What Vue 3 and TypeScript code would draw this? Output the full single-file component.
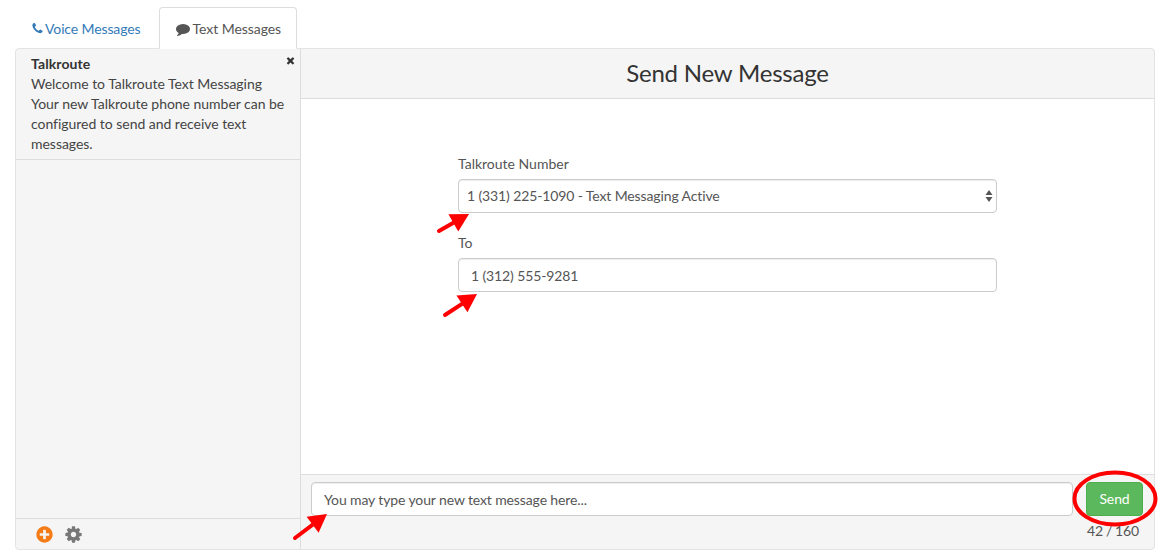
<script setup lang="ts">
const phone = 'M1600 1240q0 27-10 70.5t-21 68.5q-21 50-122 106-94 51-186 51-27 0-53-3.5t-57.5-12.5-47-14.5-55.5-20.5-49-18q-98-35-175-83-127-79-264-216t-216-264q-48-77-83-175-3-9-18-49t-20.5-55.5-14.5-47-12.5-57.5-3.5-53q0-92 51-186 56-101 106-122 25-11 68.5-21t70.5-10q14 0 21 3 18 6 53 76 11 19 30 54t35 63.5 31 53.5q3 4 17.5 25t21.5 35.5 7 28.5q0 20-28.5 50t-62 55-62 53-28.5 46q0 9 5 22.5t8.5 20.5 14 24 11.5 19q76 137 174 235t235 174q2 1 19 11.5t24 14 20.5 8.5 22.5 5q18 0 46-28.5t53-62 55-62 50-28.5q14 0 28.5 7t35.5 21.5 25 17.5q25 15 53.5 31t63.5 35 54 30q70 35 76 53 3 7 3 21z'
const comment = 'M1792 896q0 174-120 321.5t-326 233-450 85.5q-70 0-145-8-198 175-460 242-49 14-114 22-17 2-30.5-9t-17.5-29v-1q-3-4-.5-12t2-10 4.5-9.5l6-9 7-8.5 8-9q7-8 31-34.5t34.5-38 31-39.5 32.5-51 27-59 26-76q-157-89-247.5-220t-90.5-281q0-130 71-248.5t191-204.5 286-136.5 348-50.5q244 0 450 85.5t326 233 120 321.5z'
const plus = 'M1344 960v-128q0-26-19-45t-45-19h-256v-256q0-26-19-45t-45-19h-128q-26 0-45 19t-19 45v256h-256q-26 0-45 19t-19 45v128q0 26 19 45t45 19h256v256q0 26 19 45t45 19h128q26 0 45-19t19-45v-256h256q26 0 45-19t19-45zm320-64q0 209-103 385.5t-279.5 279.5-385.5 103-385.5-103-279.5-279.5-103-385.5 103-385.5 279.5-279.5 385.5-103 385.5 103 279.5 279.5 103 385.5z'
const cog = 'M1152 896q0-106-75-181t-181-75-181 75-75 181 75 181 181 75 181-75 75-181zm512-109v222q0 12-8 23t-20 13l-185 28q-19 54-39 91 35 50 107 138 10 12 10 25t-9 23q-27 37-99 108t-94 71q-12 0-26-9l-138-108q-44 23-91 38-16 136-29 186-7 28-36 28h-222q-14 0-24.5-8.5t-11.5-21.5l-28-184q-49-16-90-37l-141 107q-10 9-25 9-14 0-25-11-126-114-165-168-7-10-7-23 0-12 8-23 15-21 51-66.5t54-70.5q-27-50-41-99l-183-27q-13-2-21-12.5t-8-23.5v-222q0-12 8-23t19-13l186-28q14-46 39-92-40-57-107-138-10-12-10-24 0-10 9-23 26-36 98.5-107.5t94.5-71.5q13 0 26 10l138 107q44-23 91-38 16-136 29-186 7-28 36-28h222q14 0 24.5 8.5t11.5 21.5l28 184q49 16 90 37l142-107q9-9 24-9 13 0 25 10 129 119 165 170 7 8 7 22 0 12-8 23-15 21-51 66.5t-54 70.5q26 50 41 98l183 28q13 2 21 12.5t8 23.5z'
const remove = 'M1490 1322q0 40-28 68l-136 136q-28 28-68 28t-68-28l-294-294-294 294q-28 28-68 28t-68-28l-136-136q-28-28-28-68t28-68l294-294-294-294q-28-28-28-68t28-68l136-136q28-28 68-28t68 28l294 294 294-294q28-28 68-28t68 28l136 136q28 28 28 68t-28 68l-294 294 294 294q28 28 28 68z'
const arrows = [
  { x1: 439, y1: 231, x2: 469, y2: 214 },
  { x1: 445, y1: 315, x2: 477, y2: 294 },
  { x1: 295, y1: 538, x2: 327, y2: 514 },
]
function head(a: { x1: number; y1: number; x2: number; y2: number }): string {
  const dx = a.x2 - a.x1
  const dy = a.y2 - a.y1
  const len = Math.hypot(dx, dy)
  const ux = dx / len
  const uy = dy / len
  const bx = a.x2 - ux * 18
  const by = a.y2 - uy * 18
  return `${a.x2},${a.y2} ${bx - uy * 10},${by + ux * 10} ${bx + uy * 10},${by - ux * 10}`
}
</script>

<template>
  <div class="page">
    <ul class="tabs">
      <li class="tab">
        <svg class="ico ico-phone" viewBox="0 0 1792 1792"><path :d="phone" fill="#337ab7" /></svg>Voice Messages
      </li>
      <li class="tab active">
        <svg class="ico" viewBox="0 0 1792 1792"><path :d="comment" fill="#555" /></svg>Text Messages
      </li>
    </ul>
    <div class="panel">
      <aside class="side">
        <div class="note">
          <svg class="close" viewBox="0 0 1792 1792"><path :d="remove" fill="#333" /></svg>
          <strong>Talkroute</strong>
          <div>Welcome to Talkroute Text Messaging</div>
          <div>Your new Talkroute phone number can be configured to send and receive text messages.</div>
        </div>
        <div class="side-fill"></div>
        <div class="side-foot">
          <svg class="foot-ico" viewBox="0 0 1792 1792"><path :d="plus" fill="#f47b16" /></svg>
          <svg class="foot-ico" viewBox="0 0 1792 1792"><path :d="cog" fill="#777" /></svg>
        </div>
      </aside>
      <main class="main">
        <header class="head">Send New Message</header>
        <section class="body">
          <form class="form">
            <label class="label">Talkroute Number</label>
            <div class="select-wrap">
              <select class="control select">
                <option>1 (331) 225-1090 - Text Messaging Active</option>
              </select>
              <svg class="updown" viewBox="0 0 8 14">
                <path d="M4 1 7.5 6H.5zM4 13 .5 8h7z" fill="#555" />
              </svg>
            </div>
            <label class="label">To</label>
            <input class="control to" value="1 (312) 555-9281" />
          </form>
        </section>
        <footer class="compose">
          <input class="control msg" placeholder="You may type your new text message here..." />
          <div class="send-col">
            <button class="send" type="button">Send</button>
            <div class="count">42 / 160</div>
          </div>
        </footer>
      </main>
    </div>
    <svg class="overlay" width="1167" height="558" viewBox="0 0 1167 558">
      <g v-for="(a, i) in arrows" :key="i">
        <line :x1="a.x1" :y1="a.y1" :x2="a.x2 - (a.x2 - a.x1) * 0.3" :y2="a.y2 - (a.y2 - a.y1) * 0.3" stroke="#f00" stroke-width="4" stroke-linecap="round" />
        <polygon :points="head(a)" fill="#f00" />
      </g>
      <ellipse cx="1115" cy="498.5" rx="40.5" ry="26" fill="none" stroke="#f00" stroke-width="4" />
    </svg>
  </div>
</template>

<style>
html, body { margin: 0; background: #fff; }
</style>

<style scoped>
.page {
  position: relative;
  width: 1167px;
  height: 558px;
  padding: 7px 12px 0 15px;
  box-sizing: border-box;
  overflow: hidden;
  font-family: Lato, "Open Sans", sans-serif;
  font-size: 14px;
  line-height: 20px;
  letter-spacing: -0.12px;
  color: #555;
}
.tabs {
  display: flex;
  list-style: none;
  margin: 0 0 -1px;
  padding: 0;
  height: 42px;
  position: relative;
  z-index: 1;
}
.tab {
  padding: 11px 16px 10px 15px;
  margin-right: 2px;
  border: 1px solid transparent;
  border-radius: 4px 4px 0 0;
  color: #337ab7;
  white-space: nowrap;
}
.active {
  color: #555;
  background: #fff;
  border-color: #ddd #ddd #fff;
  padding-left: 16px;
  padding-right: 15px;
  letter-spacing: -0.05px;
}
.ico {
  width: 14px;
  height: 14px;
  margin-right: 2px;
  vertical-align: -2px;
}
.ico-phone {
  width: 13px;
  height: 13px;
  margin-right: 1px;
  vertical-align: -1px;
}
.panel {
  display: flex;
  height: 502px;
  border: 1px solid #e3e3e3;
  border-radius: 4px;
  box-sizing: border-box;
  background: #f5f5f5;
  color: #555;
}
.side {
  width: 285px;
  flex: none;
  display: flex;
  flex-direction: column;
  border-right: 1px solid #ddd;
  box-sizing: border-box;
}
.note {
  position: relative;
  padding: 5px 10px 5px 15px;
  height: 111px;
  box-sizing: border-box;
  border-bottom: 1px solid #ddd;
  color: #444;
  letter-spacing: -0.03px;
}
.note strong { color: #333; display: block; letter-spacing: 0.1px; }
.close {
  position: absolute;
  right: 4px;
  top: 6px;
  width: 11px;
  height: 11px;
}
.side-fill { flex: 1; }
.side-foot {
  height: 31px;
  border-top: 1px solid #ddd;
  display: flex;
  align-items: center;
  gap: 10px;
  padding-left: 19px;
  box-sizing: border-box;
}
.foot-ico { width: 19px; height: 19px; }
.main {
  flex: 1;
  display: flex;
  flex-direction: column;
  min-width: 0;
}
.head {
  height: 50px;
  box-sizing: border-box;
  border-bottom: 1px solid #ddd;
  text-align: center;
  font-size: 24px;
  letter-spacing: -0.2px;
  line-height: 47px;
  color: #333;
}
.body {
  flex: 1;
  background: #fff;
  padding-top: 55px;
}
.form {
  width: 539px;
  margin-left: 157px;
}
.label {
  display: block;
  height: 20px;
  margin-bottom: 5px;
  color: #555;
  letter-spacing: 0;
}
.control {
  display: block;
  box-sizing: border-box;
  height: 34px;
  border: 1px solid #ccc;
  border-radius: 4px;
  background: #fff;
  font: inherit;
  letter-spacing: inherit;
  color: #555;
  outline: none;
  box-shadow: inset 0 1px 1px rgba(0, 0, 0, .075);
}
.select-wrap {
  position: relative;
  margin-bottom: 20px;
}
.select {
  width: 100%;
  padding: 0 8px;
  appearance: none;
}
.updown {
  position: absolute;
  right: 4px;
  top: 10px;
  width: 8px;
  height: 14px;
}
.to {
  width: 100%;
  padding: 0 12px;
}
.compose {
  height: 75px;
  box-sizing: border-box;
  border-top: 1px solid #ddd;
  display: flex;
  padding: 7px 11px 0 10px;
  gap: 13px;
}
.msg {
  flex: 1;
  min-width: 0;
  padding: 0 12px;
}
.msg::placeholder { color: #555; opacity: 1; }
.send-col { width: 57px; flex: none; }
.send {
  display: block;
  width: 57px;
  height: 34px;
  background: #5cb85c;
  border: 1px solid #4cae4c;
  border-radius: 4px;
  color: #fff;
  font: inherit;
  letter-spacing: inherit;
  padding: 0;
}
.count {
  text-align: right;
  margin-right: 4px;
  margin-top: 5px;
  word-spacing: -0.6px;
  white-space: nowrap;
}
.overlay {
  position: absolute;
  left: 0;
  top: 0;
  pointer-events: none;
  z-index: 2;
}
</style>
